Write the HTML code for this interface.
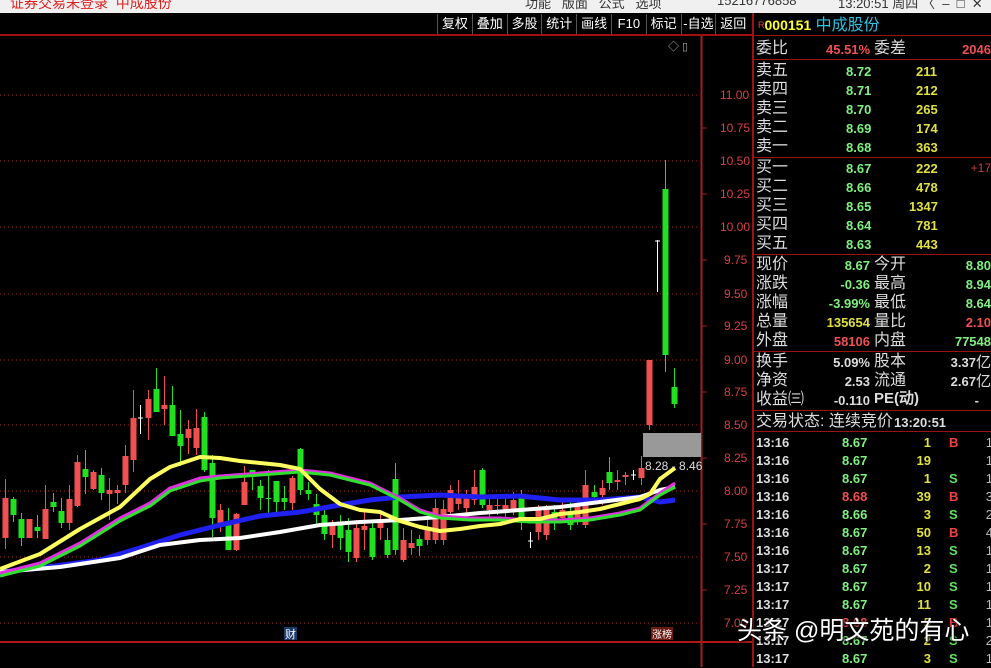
<!DOCTYPE html>
<html><head><meta charset="utf-8"><style>
*{margin:0;padding:0;box-sizing:border-box}
body{width:991px;height:667px;background:#000;overflow:hidden;position:relative;font-family:"Liberation Sans","Noto Sans CJK SC",sans-serif}
.top{position:absolute;left:0;top:0;width:991px;height:13px;background:#f0f0f0;overflow:hidden}
.top span{position:absolute;top:-7px;font-size:14px;white-space:nowrap}
.tb{position:absolute;top:14px;height:20px;font-size:13px;color:#fff;line-height:20px;display:flex}
.tb div{width:34.8px;text-align:center;border-left:1px solid #555;white-space:nowrap}
.rp{position:absolute;left:752px;top:13px;width:239px;height:654px;border-left:2px solid #a01010}
.row{position:absolute;left:2px;width:237px;height:19px;font-size:16px;line-height:17px;color:#ddd;white-space:nowrap}
.row b{position:absolute;font-family:"Liberation Sans",sans-serif;font-size:13px;top:2px;line-height:15px}
.sep{position:absolute;left:0;width:239px;height:1px;background:#a01010}
.ax{position:absolute;left:720px;font-size:12px;color:#d84040}
.t{position:absolute;left:2px;width:237px;height:18px;font-family:"Liberation Sans",sans-serif;font-weight:bold;font-size:13px;color:#ddd}
.t span{position:absolute;top:1px}
</style></head><body>
<div class="top">
<span style="left:10px;color:#e02020">证券交易未登录&nbsp;&nbsp;中成股份</span>
<span style="left:525px;color:#333;font-size:13px">功能&nbsp;&nbsp;&nbsp;版面&nbsp;&nbsp;&nbsp;公式&nbsp;&nbsp;&nbsp;选项</span>
<span style="left:717px;color:#333;font-size:13px">15216776858</span>
<span style="left:838px;color:#333;font-size:13px">13:20:51 周四</span>
<span style="left:922px;color:#333;font-size:13px">〈&nbsp;&nbsp;–&nbsp;&nbsp;□&nbsp;&nbsp;✕</span>
</div>
<div style="position:absolute;left:0;top:34px;width:752px;height:2px;background:#a01010"></div>
<div class="tb" style="left:437px"><div>复权</div><div>叠加</div><div>多股</div><div>统计</div><div>画线</div><div>F10</div><div>标记</div><div>-自选</div><div>返回</div></div>
<div style="position:absolute;left:668px;top:38px;color:#aaa;font-size:11px">◇ ▯</div>

<svg style="position:absolute;left:0;top:0" width="752" height="667">
<g stroke="#a02020" stroke-dasharray="1,3" stroke-width="1">
<line x1="0" y1="95" x2="700" y2="95"/><line x1="0" y1="161" x2="700" y2="161"/><line x1="0" y1="227" x2="700" y2="227"/><line x1="0" y1="294" x2="700" y2="294"/><line x1="0" y1="360" x2="700" y2="360"/><line x1="0" y1="425" x2="700" y2="425"/><line x1="0" y1="491" x2="700" y2="491"/><line x1="0" y1="557" x2="700" y2="557"/><line x1="0" y1="623" x2="700" y2="623"/>
</g>
<line x1="701.5" y1="36" x2="701.5" y2="667" stroke="#a02020" stroke-width="2"/>
<line x1="0" y1="642" x2="752" y2="642" stroke="#b01818" stroke-width="2"/>
<g stroke="#a02020"><line x1="702" y1="128" x2="707" y2="128"/><line x1="702" y1="194" x2="707" y2="194"/><line x1="702" y1="260" x2="707" y2="260"/><line x1="702" y1="326" x2="707" y2="326"/><line x1="702" y1="392" x2="707" y2="392"/><line x1="702" y1="458" x2="707" y2="458"/><line x1="702" y1="524" x2="707" y2="524"/><line x1="702" y1="590" x2="707" y2="590"/></g>
<rect x="643" y="433" width="58" height="24" fill="#999"/>
<g id="c"></g>
<g fill="none" stroke-linejoin="round">
<polyline stroke="#2020f0" stroke-width="5" points="0,572 40,568 100,560 140,548 180,535 220,525 260,516 300,512 340,505 370,500 400,497 440,495 480,497 520,496 560,500 600,500 640,497 660,502 675,500"/>
<polyline stroke="#ffffff" stroke-width="4" points="0,572 60,567 120,558 160,545 200,540 240,538 280,532 320,525 360,522 400,520 440,517 480,513 520,510 560,507 600,502 640,497 660,490 675,487"/>
<polyline stroke="#e030e0" stroke-width="3" points="0,573 40,563 80,543 120,518 150,503 170,488 200,478 220,476 260,473 300,470 330,473 370,483 400,498 420,510 440,516 470,518 500,518 530,520 560,520 590,518 620,513 640,508 660,493 675,483"/>
<polyline stroke="#30e030" stroke-width="3" points="0,576 40,566 80,546 120,521 150,506 170,491 200,481 220,478 260,475 300,472 330,475 370,485 400,500 420,512 440,518 470,520 500,520 530,522 560,522 590,520 620,515 640,510 660,495 675,487"/>
<polyline stroke="#ffff60" stroke-width="4" points="0,569 40,554 80,529 120,507 150,479 170,467 200,457 220,458 240,461 280,465 300,469 320,489 340,504 360,510 380,512 400,521 420,527 440,531 460,529 480,526 500,524 520,519 540,519 560,514 580,512 600,509 620,504 640,499 650,494 660,479 675,468"/>
</g>
<text x="645" y="470" fill="#ddd" font-size="12" font-family="Liberation Sans">8.28 - 8.46</text>
<rect x="284" y="627" width="13" height="13" fill="#1a3a6a"/><text x="285" y="638" fill="#fff" font-size="11" font-family="Noto Sans CJK SC">财</text>
<rect x="651" y="627" width="22" height="13" fill="#6a1a10"/><text x="652" y="638" fill="#fff" font-size="10" font-family="Noto Sans CJK SC">涨榜</text>
</svg>
<script>
var d=[[5,498,538,479,549,'r'],[13,499,515,497,522,'g'],[21,519,538,513,546,'g'],[29,519,538,519,538,'r'],[37,527,531,515,538,'g'],[45,509,539,485,539,'r'],[53,502,507,493,512,'g'],[61,511,523,498,528,'g'],[69,499,523,485,530,'r'],[77,462,506,455,507,'r'],[85,469,477,450,494,'g'],[93,472,489,470,490,'r'],[101,475,493,468,500,'g'],[109,490,494,478,520,'r'],[117,490,493,485,504,'r'],[125,456,485,445,493,'r'],[133,418,460,390,472,'r'],[140,418,419,405,434,'w'],[148,399,418,390,440,'r'],[156,389,412,368,412,'g'],[164,405,409,376,425,'r'],[172,405,436,386,436,'g'],[180,434,446,410,466,'g'],[188,429,438,420,454,'r'],[196,428,448,409,455,'r'],[204,417,470,412,472,'g'],[212,463,518,455,537,'g'],[220,510,524,504,532,'r'],[228,522,550,508,550,'g'],[236,514,550,513,551,'r'],[244,482,505,466,505,'r'],[252,470,476,470,490,'g'],[260,486,498,480,510,'g'],[268,498,499,470,516,'g'],[276,481,502,481,516,'g'],[284,498,502,486,510,'g'],[292,478,503,476,510,'r'],[300,449,490,448,495,'g'],[308,490,494,482,500,'g'],[316,504,515,494,525,'g'],[324,515,534,506,540,'g'],[332,525,535,520,548,'r'],[340,523,538,515,550,'g'],[348,530,552,518,562,'g'],[356,528,558,520,562,'r'],[364,526,530,511,550,'r'],[372,528,557,520,560,'g'],[380,520,528,512,540,'r'],[387,540,555,528,558,'g'],[395,479,550,463,555,'g'],[403,540,560,528,562,'r'],[411,543,548,530,555,'r'],[419,539,546,535,556,'g'],[427,530,540,520,545,'r'],[435,508,540,499,544,'r'],[443,509,540,500,545,'r'],[450,490,512,485,515,'r'],[458,497,504,480,510,'r'],[466,495,508,490,515,'r'],[474,487,500,470,505,'r'],[482,470,505,468,508,'g'],[489,505,510,495,520,'r'],[497,505,506,498,515,'r'],[505,505,510,498,520,'r'],[513,500,509,492,515,'r'],[521,496,520,490,530,'g'],[530,541,542,532,548,'w'],[538,510,532,505,540,'r'],[546,510,535,505,540,'r'],[554,512,520,505,530,'g'],[562,510,518,502,520,'r'],[570,513,525,500,530,'g'],[577,505,522,500,525,'r'],[585,485,525,470,528,'r'],[594,492,497,485,500,'g'],[602,488,495,480,505,'r'],[609,472,483,457,490,'g'],[617,480,482,470,490,'r'],[625,475,477,472,485,'r'],[633,475,476,470,480,'w'],[641,468,478,456,485,'r'],[649,360,425,360,430,'r'],[657,241,242,240,292,'w'],[665,189,355,160,372,'g'],[674,387,404,368,408,'g']];
var col={r:'#f05050',g:'#20e020',w:'#fff'},s='';
d.forEach(function(c){var x=c[0],k=col[c[5]];s+='<line x1="'+(x+0.5)+'" y1="'+c[3]+'" x2="'+(x+0.5)+'" y2="'+c[4]+'" stroke="'+k+'"/>';var h=Math.max(1,c[2]-c[1]);if(c[5]=='w'){s+='<line x1="'+(x-2)+'" y1="'+c[1]+'" x2="'+(x+3)+'" y2="'+c[1]+'" stroke="#fff"/>'}else s+='<rect x="'+(x-2.5)+'" y="'+c[1]+'" width="6" height="'+h+'" fill="'+k+'"/>';});
document.getElementById('c').innerHTML=s;
</script>
<div class="ax" style="top:88px">11.00</div><div class="ax" style="top:121px">10.75</div><div class="ax" style="top:154px">10.50</div><div class="ax" style="top:187px">10.25</div><div class="ax" style="top:220px">10.00</div><div class="ax" style="top:253px;left:724px">9.75</div><div class="ax" style="top:287px;left:724px">9.50</div><div class="ax" style="top:319px;left:724px">9.25</div><div class="ax" style="top:353px;left:724px">9.00</div><div class="ax" style="top:385px;left:724px">8.75</div><div class="ax" style="top:418px;left:724px">8.50</div><div class="ax" style="top:451px;left:724px">8.25</div><div class="ax" style="top:484px;left:724px">8.00</div><div class="ax" style="top:517px;left:724px">7.75</div><div class="ax" style="top:550px;left:724px">7.50</div><div class="ax" style="top:583px;left:724px">7.25</div><div class="ax" style="top:616px;left:724px">7.00</div>

<div class="rp">
<div style="position:absolute;left:4px;top:3px;font-size:16px;line-height:18px;white-space:nowrap"><span style="color:#e04040;font-size:9px;vertical-align:top">R</span><span style="color:#ffff30;font-family:'Liberation Sans';font-weight:bold;font-size:14px">000151</span> <span style="color:#30c0e0">中成股份</span></div>
<div class="sep" style="top:22px"></div>
<div class="row" style="top:27px">委比<b style="left:70px;color:#f05050">45.51%</b><span style="position:absolute;left:118px">委差</span><b style="right:2px;color:#f05050">2046</b></div>
<div class="sep" style="top:46px"></div>
<div class="row" style="top:49px">卖五<b style="left:90px;color:#80f080">8.72</b><b style="left:160px;color:#e0e040">211</b></div>
<div class="row" style="top:68px">卖四<b style="left:90px;color:#80f080">8.71</b><b style="left:160px;color:#e0e040">212</b></div>
<div class="row" style="top:87px">卖三<b style="left:90px;color:#80f080">8.70</b><b style="left:160px;color:#e0e040">265</b></div>
<div class="row" style="top:106px">卖二<b style="left:90px;color:#80f080">8.69</b><b style="left:160px;color:#e0e040">174</b></div>
<div class="row" style="top:125px">卖一<b style="left:90px;color:#80f080">8.68</b><b style="left:160px;color:#e0e040">363</b></div>
<div class="sep" style="top:144px"></div>
<div class="row" style="top:146px">买一<b style="left:90px;color:#80f080">8.67</b><b style="left:160px;color:#e0e040">222</b><b style="right:2px;color:#c04040;font-weight:normal;font-size:12px">+17</b></div>
<div class="row" style="top:165px">买二<b style="left:90px;color:#80f080">8.66</b><b style="left:160px;color:#e0e040">478</b></div>
<div class="row" style="top:184px">买三<b style="left:90px;color:#80f080">8.65</b><b style="left:153px;color:#e0e040">1347</b></div>
<div class="row" style="top:203px">买四<b style="left:90px;color:#80f080">8.64</b><b style="left:160px;color:#e0e040">781</b></div>
<div class="row" style="top:222px">买五<b style="left:90px;color:#80f080">8.63</b><b style="left:160px;color:#e0e040">443</b></div>
<div class="sep" style="top:241px"></div>
<div class="row" style="top:243px">现价<b style="right:123px;color:#80f080">8.67</b><span style="position:absolute;left:118px">今开</span><b style="right:2px;color:#80f080">8.80</b></div>
<div class="row" style="top:262px">涨跌<b style="right:123px;color:#80f080">-0.36</b><span style="position:absolute;left:118px">最高</span><b style="right:2px;color:#80f080">8.94</b></div>
<div class="row" style="top:281px">涨幅<b style="right:123px;color:#80f080">-3.99%</b><span style="position:absolute;left:118px">最低</span><b style="right:2px;color:#80f080">8.64</b></div>
<div class="row" style="top:300px">总量<b style="right:123px;color:#e0e040">135654</b><span style="position:absolute;left:118px">量比</span><b style="right:2px;color:#f05050">2.10</b></div>
<div class="row" style="top:319px">外盘<b style="right:123px;color:#f05050">58106</b><span style="position:absolute;left:118px">内盘</span><b style="right:2px;color:#80f080">77548</b></div>
<div class="sep" style="top:338px"></div>
<div class="row" style="top:340px">换手<b style="right:123px">5.09%</b><span style="position:absolute;left:118px">股本</span><b style="right:2px">3.37<span style="font-weight:normal;font-size:15px">亿</span></b></div>
<div class="row" style="top:359px">净资<b style="right:123px">2.53</b><span style="position:absolute;left:118px">流通</span><b style="right:2px">2.67<span style="font-weight:normal;font-size:15px">亿</span></b></div>
<div class="row" style="top:378px">收益㈢<b style="right:123px">-0.110</b><b style="left:118px;font-size:15px;top:0">PE(动)</b><b style="right:14px">-</b></div>
<div class="sep" style="top:397px"></div>
<div class="row" style="top:400px">交易状态: 连续竞价 <b style="left:138px">13:20:51</b></div>
<div class="sep" style="top:418px"></div>
<div class="t" style="top:421px"><span>13:16</span><span style="left:86px;color:#80f080">8.67</span><span style="right:62px;color:#e0e040">1</span><span style="left:193px;color:#f04040">B</span><span style="right:0;color:#bbb;font-weight:normal">1</span></div>
<div class="t" style="top:439px"><span>13:16</span><span style="left:86px;color:#80f080">8.67</span><span style="right:62px;color:#e0e040">19</span><span style="right:0;color:#bbb;font-weight:normal">1</span></div>
<div class="t" style="top:457px"><span>13:16</span><span style="left:86px;color:#80f080">8.67</span><span style="right:62px;color:#e0e040">1</span><span style="left:193px;color:#60e060">S</span><span style="right:0;color:#bbb;font-weight:normal">1</span></div>
<div class="t" style="top:475px"><span>13:16</span><span style="left:86px;color:#f05050">8.68</span><span style="right:62px;color:#e0e040">39</span><span style="left:193px;color:#f04040">B</span><span style="right:0;color:#bbb;font-weight:normal">3</span></div>
<div class="t" style="top:493px"><span>13:16</span><span style="left:86px;color:#80f080">8.66</span><span style="right:62px;color:#e0e040">3</span><span style="left:193px;color:#60e060">S</span><span style="right:0;color:#bbb;font-weight:normal">2</span></div>
<div class="t" style="top:511px"><span>13:16</span><span style="left:86px;color:#80f080">8.67</span><span style="right:62px;color:#e0e040">50</span><span style="left:193px;color:#f04040">B</span><span style="right:0;color:#bbb;font-weight:normal">4</span></div>
<div class="t" style="top:529px"><span>13:16</span><span style="left:86px;color:#80f080">8.67</span><span style="right:62px;color:#e0e040">13</span><span style="left:193px;color:#60e060">S</span><span style="right:0;color:#bbb;font-weight:normal">1</span></div>
<div class="t" style="top:547px"><span>13:17</span><span style="left:86px;color:#80f080">8.67</span><span style="right:62px;color:#e0e040">2</span><span style="left:193px;color:#60e060">S</span><span style="right:0;color:#bbb;font-weight:normal">1</span></div>
<div class="t" style="top:565px"><span>13:17</span><span style="left:86px;color:#80f080">8.67</span><span style="right:62px;color:#e0e040">10</span><span style="left:193px;color:#60e060">S</span><span style="right:0;color:#bbb;font-weight:normal">1</span></div>
<div class="t" style="top:583px"><span>13:17</span><span style="left:86px;color:#80f080">8.67</span><span style="right:62px;color:#e0e040">11</span><span style="left:193px;color:#60e060">S</span><span style="right:0;color:#bbb;font-weight:normal">1</span></div>
<div class="t" style="top:601px"><span>13:17</span><span style="left:86px;color:#f05050">8.68</span><span style="right:62px;color:#e0e040">5</span><span style="left:193px;color:#f04040">B</span><span style="right:0;color:#bbb;font-weight:normal">1</span></div>
<div class="t" style="top:619px"><span>13:17</span><span style="left:86px;color:#80f080">8.67</span><span style="right:62px;color:#e0e040">2</span><span style="left:193px;color:#60e060">S</span><span style="right:0;color:#bbb;font-weight:normal">2</span></div>
<div class="t" style="top:637px"><span>13:17</span><span style="left:86px;color:#80f080">8.67</span><span style="right:62px;color:#e0e040">3</span><span style="left:193px;color:#60e060">S</span><span style="right:0;color:#bbb;font-weight:normal">1</span></div>
</div>
<div style="position:absolute;left:737px;top:616px;font-size:25px;line-height:30px;color:#fff;white-space:nowrap;text-shadow:0 0 3px #000,1px 1px 2px #000;font-family:'Liberation Sans','Noto Sans CJK SC',sans-serif">头条 @明文苑的有心</div>
</body></html>
